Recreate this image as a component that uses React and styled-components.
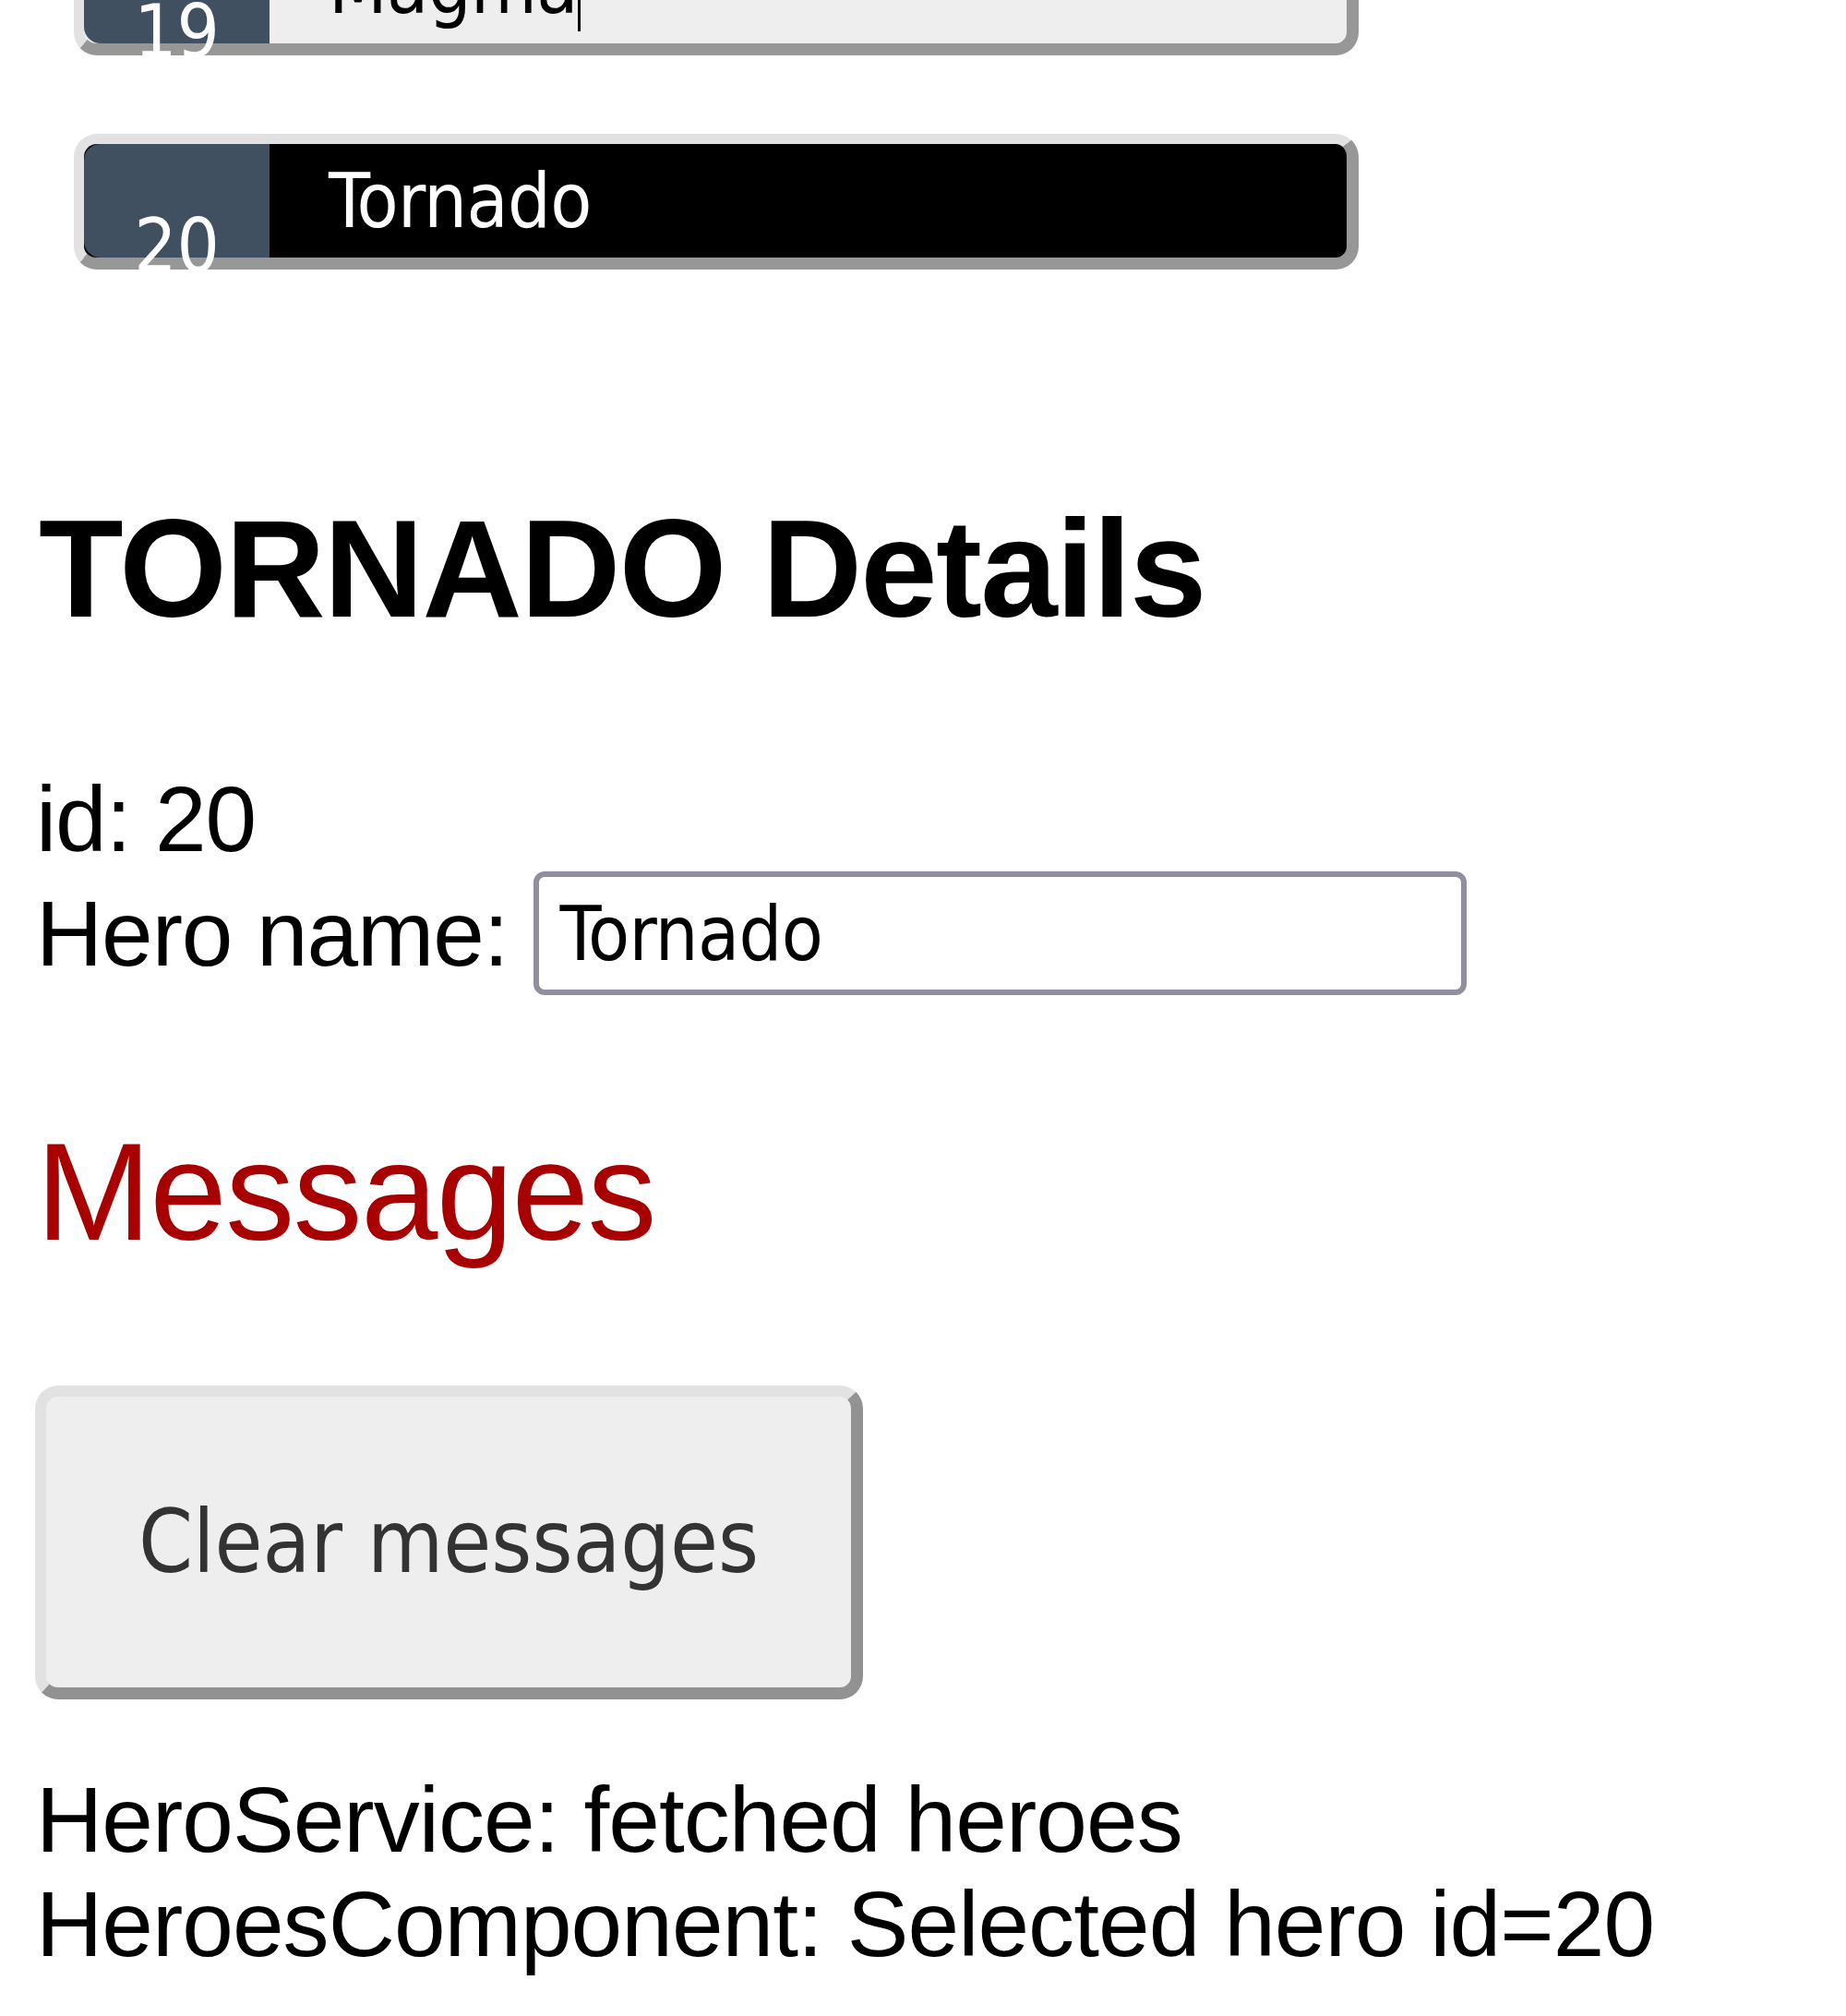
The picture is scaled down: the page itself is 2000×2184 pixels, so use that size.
import React from 'react';
import styled, { createGlobalStyle } from 'styled-components';

const controlFont = `"DejaVu Sans Condensed", "Liberation Sans", sans-serif`;

const GlobalStyle = createGlobalStyle`
  html, body {
    margin: 0;
    padding: 0;
    background: #ffffff;
  }
  body {
    font-family: "Liberation Sans", Arial, sans-serif;
    color: #000;
  }
`;

const Page = styled.div`
  box-sizing: border-box;
  width: 2000px;
  height: 2184px;
  overflow: hidden;
  padding-left: 39px;
`;

const HeroList = styled.ul`
  list-style: none;
  margin: -87px 0 0 41px;
  padding: 0;
  display: flex;
  flex-direction: column;
  gap: 85px;
`;

const HeroItem = styled.li`
  display: flex;
`;

const HeroButton = styled.button`
  box-sizing: border-box;
  display: flex;
  align-items: stretch;
  width: 1392px;
  height: 147px;
  margin: 0;
  padding: 0;
  border-style: solid;
  border-width: 11px 13px 13px 11px;
  border-color: #e2e2e2 #979797 #979797 #e2e2e2;
  border-radius: 25px;
  background: ${(p) => (p.$selected ? '#000000' : '#eeeeee')};
  color: ${(p) => (p.$selected ? '#ffffff' : '#000000')};
  font-family: ${controlFont};
  font-size: 82px;
  text-align: left;
  cursor: pointer;
  overflow: visible;
`;

const Badge = styled.span`
  box-sizing: border-box;
  display: block;
  width: 201px;
  padding-top: 70px;
  margin-right: 64px;
  text-align: center;
  font-size: 81px;
  line-height: 81px;
  color: #ffffff;
  background: #405061;
  border-radius: 18px 0 0 18px;
`;

const HeroName = styled.span`
  align-self: center;
  line-height: normal;
  white-space: nowrap;
  letter-spacing: -0.6px;
`;

const Caret = styled.span`
  display: inline-block;
  width: 3px;
  height: 92px;
  margin-left: 0;
  vertical-align: -20px;
  background: #000000;
`;

const DetailsTitle = styled.h2`
  margin: 238px 0 0 3px;
  font-size: 150px;
  line-height: 172px;
  font-weight: bold;
  letter-spacing: -1.7px;
  color: #000000;
`;

const IdLine = styled.div`
  margin-top: 129px;
  font-size: 100px;
  line-height: 113px;
  letter-spacing: -1.1px;
`;

const NameRow = styled.div`
  display: flex;
  align-items: center;
  gap: 28px;
  font-size: 100px;
  line-height: 115px;
  letter-spacing: -1.1px;
`;

const NameLabel = styled.label`
  white-space: nowrap;
`;

const NameInput = styled.input`
  box-sizing: border-box;
  width: 1011px;
  height: 134px;
  margin: 0;
  padding: 0 12px 0 22px;
  border: 6px solid #8f8f9d;
  border-radius: 12px;
  background: #ffffff;
  color: #000000;
  font-family: ${controlFont};
  font-size: 82px;
  letter-spacing: -0.6px;
  outline: none;
`;

const MessagesTitle = styled.h2`
  margin: 127px 0 0 0;
  font-size: 150px;
  line-height: 172px;
  font-weight: normal;
  letter-spacing: -1.6px;
  color: #a80000;
`;

const ClearButton = styled.button`
  box-sizing: border-box;
  display: block;
  margin: 124px 0 0 -1px;
  width: 897px;
  height: 340px;
  padding: 100px 0;
  border-style: solid;
  border-width: 12px 13px 13px 12px;
  border-color: #e2e2e2 #929292 #929292 #e2e2e2;
  border-radius: 25px;
  background: #eeeeee;
  color: #333333;
  font-family: ${controlFont};
  font-size: 94px;
  line-height: 116px;
  text-align: center;
  white-space: nowrap;
  cursor: pointer;
`;

const MessageList = styled.div`
  margin-top: 74px;
`;

const MessageLine = styled.div`
  font-size: 100px;
  line-height: 113px;
  letter-spacing: -0.95px;
  white-space: nowrap;
`;

const heroes = [
  { id: 19, name: 'Magma', caret: true },
  { id: 20, name: 'Tornado' },
];

const messages = [
  'HeroService: fetched heroes',
  'HeroesComponent: Selected hero id=20',
];

export default function App() {
  const selected = heroes[1];
  return (
    <>
      <GlobalStyle />
      <Page>
        <HeroList>
          {heroes.map((h) => (
            <HeroItem key={h.id}>
              <HeroButton type="button" $selected={h.id === selected.id}>
                <Badge>{h.id}</Badge>
                <HeroName>
                  {h.name}
                  {h.caret && <Caret />}
                </HeroName>
              </HeroButton>
            </HeroItem>
          ))}
        </HeroList>

        <DetailsTitle>{selected.name.toUpperCase()} Details</DetailsTitle>
        <IdLine>
          <span>id: </span>
          {selected.id}
        </IdLine>
        <NameRow>
          <NameLabel htmlFor="hero-name">Hero name:</NameLabel>
          <NameInput id="hero-name" defaultValue={selected.name} placeholder="name" />
        </NameRow>

        <MessagesTitle>Messages</MessagesTitle>
        <ClearButton type="button">Clear messages</ClearButton>
        <MessageList>
          {messages.map((m) => (
            <MessageLine key={m}>{m}</MessageLine>
          ))}
        </MessageList>
      </Page>
    </>
  );
}
